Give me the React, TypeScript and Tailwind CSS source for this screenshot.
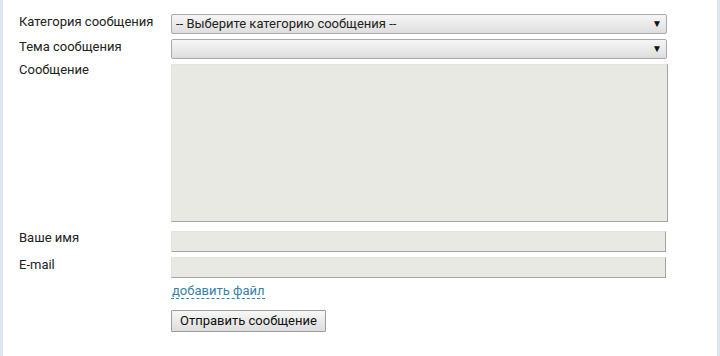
export default function App() {
  const label = "text-[13px] leading-[16px] text-[#222]"
  const field = "w-full bg-[#e9e9e3] border border-t-[#e4e4de] border-l-[#e4e4de] border-r-[#a4a4a0] border-b-[#a4a4a0]"
  const select = "relative w-full h-[20px] rounded-[2px] border border-[#a9a9a9] bg-gradient-to-b from-[#f6f6f6] to-[#dedede] text-[13px] leading-[18px] pl-[4px] text-[#222]"

  return (
    <div className="h-[356px] w-[720px] bg-white border-l-[3px] border-r-[3px] border-[#dce7f0] font-['Roboto',sans-serif] overflow-hidden">
      <div className="grid grid-cols-[152px_497px] pl-[16px] pt-[14px]">
        <div className={label}>Категория сообщения</div>
        <div className={`${select} !w-[496px]`}>
          -- Выберите категорию сообщения --
          <span className="absolute right-[4px] top-[0px] text-[10px] text-[#111]">▼</span>
        </div>

        <div className={`${label} mt-[5px]`}>Тема сообщения</div>
        <div className={`${select} mt-[5px] !w-[496px]`}>
          <span className="absolute right-[4px] top-[0px] text-[10px] text-[#111]">▼</span>
        </div>

        <div className={`${label} mt-[3px]`}>Сообщение</div>
        <div className={`${field} mt-[5px] h-[158px]`} />

        <div className={`${label} mt-[8px]`}>Ваше имя</div>
        <div className={`${field} mt-[9px] h-[21px] !w-[495px]`} />

        <div className={`${label} mt-[5px]`}>E-mail</div>
        <div className={`${field} mt-[5px] h-[21px] !w-[495px]`} />

        <div />
        <div className="mt-[4px] leading-[16px]">
          <span className="text-[13px] leading-[16px] text-[#3682ab] border-b border-dashed border-[#3682ab] pl-[1px]">добавить файл</span>
        </div>

        <div />
        <div className="mt-[10px] leading-[22px]">
          <button className="h-[22px] px-[8px] border border-[#9c9c9c] rounded-[1px] bg-gradient-to-b from-[#f7f7f7] to-[#dddddd] text-[13px] leading-[18px] text-[#111]">
            Отправить сообщение
          </button>
        </div>
      </div>
    </div>
  )
}
